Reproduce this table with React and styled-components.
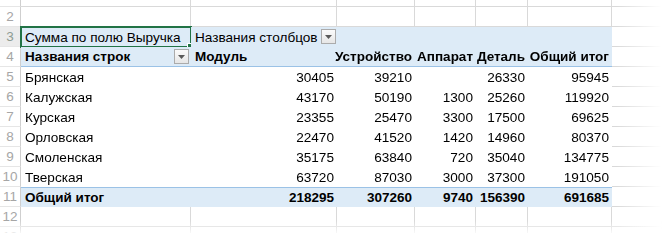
import React from "react";
import styled, { createGlobalStyle, css } from "styled-components";

const GlobalStyle = createGlobalStyle`
  html, body {
    margin: 0;
    padding: 0;
    background: #ffffff;
  }
  body {
    font-family: "Liberation Sans", Arial, sans-serif;
    font-size: 13.6px;
    color: #000000;
  }
`;

const COLS = "21px 170px 146px 78px 61px 52px 84px 1fr";
const GRID_LINE = "#d9d9d9";
const PIVOT_FILL = "#ddebf7";
const PIVOT_LINE = "#9bc2e6";

const FadeX = styled.div`
  width: 662px;
  height: 246px;
  overflow: hidden;
  -webkit-mask-image: linear-gradient(to right, #000 0, #000 616px, transparent 662px);
  mask-image: linear-gradient(to right, #000 0, #000 616px, transparent 662px);
`;

const FadeY = styled.div`
  height: 100%;
  -webkit-mask-image: linear-gradient(to bottom, transparent 0, #000 10px, #000 234px, rgba(0, 0, 0, 0.2) 246px);
  mask-image: linear-gradient(to bottom, transparent 0, #000 10px, #000 234px, rgba(0, 0, 0, 0.2) 246px);
`;

const Sheet = styled.div`
  display: grid;
  grid-template-columns: ${COLS};
  grid-auto-rows: 20px;
  margin-top: -13px;
`;

const RowHead = styled.div`
  box-sizing: border-box;
  display: flex;
  align-items: flex-end;
  justify-content: center;
  padding-bottom: 2px;
  font-size: 13.5px;
  color: ${(p) => (p.$active ? "#8e9c93" : "#a6a6a6")};
  background: ${(p) => (p.$active ? "#ececec" : "#ffffff")};
  border-right: 1px solid #cfcfcf;
  border-bottom: 1px solid #e6e6e6;
`;

const Cell = styled.div`
  box-sizing: border-box;
  position: relative;
  display: flex;
  align-items: flex-end;
  justify-content: ${(p) => (p.$right ? "flex-end" : "flex-start")};
  padding: 0 3px 2px 4px;
  white-space: nowrap;
  font-weight: ${(p) => (p.$bold ? 700 : 400)};
  font-size: ${(p) => (p.$bold ? "13.5px" : "inherit")};
  background: ${(p) => (p.$fill ? PIVOT_FILL : "transparent")};
  ${(p) =>
    p.$grid &&
    css`
      border-right: 1px solid ${GRID_LINE};
      border-bottom: 1px solid ${GRID_LINE};
    `}
  ${(p) =>
    p.$underline &&
    css`
      border-bottom: 1px solid ${PIVOT_LINE};
    `}
  ${(p) =>
    p.$overline &&
    css`
      border-top: 1px solid ${PIVOT_LINE};
    `}
`;

const Selection = styled.div`
  position: absolute;
  left: -1px;
  top: -1px;
  right: -1px;
  bottom: -1px;
  border: 2px solid #217346;
  pointer-events: none;

  &::after {
    content: "";
    position: absolute;
    right: -5px;
    bottom: -5px;
    width: 6px;
    height: 6px;
    background: #217346;
    border: 1px solid #ffffff;
  }
`;

const DropButton = styled.span`
  position: absolute;
  right: ${(p) => p.$right}px;
  top: 2px;
  width: 15px;
  height: 15px;
  box-sizing: border-box;
  border: 1px solid #ababab;
  background: linear-gradient(#fbfbfb, #e6e6e6);
  display: flex;
  align-items: center;
  justify-content: center;
`;

const Arrow = () => (
  <svg width="7" height="4" viewBox="0 0 7 4">
    <path d="M0 0h7L3.5 4z" fill="#5a5a5a" />
  </svg>
);

const rows = [
  ["Брянская", 30405, 39210, "", 26330, 95945],
  ["Калужская", 43170, 50190, 1300, 25260, 119920],
  ["Курская", 23355, 25470, 3300, 17500, 69625],
  ["Орловская", 22470, 41520, 1420, 14960, 80370],
  ["Смоленская", 35175, 63840, 720, 35040, 134775],
  ["Тверская", 63720, 87030, 3000, 37300, 191050],
];

const total = ["Общий итог", 218295, 307260, 9740, 156390, 691685];

const EmptyRow = ({ n }) => (
  <>
    <RowHead>{n}</RowHead>
    {Array.from({ length: 7 }).map((_, i) => (
      <Cell key={i} $grid />
    ))}
  </>
);

const DataRow = ({ n, values, bold, last }) => (
  <>
    <RowHead>{n}</RowHead>
    {values.map((v, i) => (
      <Cell key={i} $right={i > 0} $bold={bold} $fill={last} $overline={last}>
        {v}
      </Cell>
    ))}
    <Cell $grid />
  </>
);

export default function App() {
  return (
    <>
      <GlobalStyle />
      <FadeX>
        <FadeY>
          <Sheet>
            <EmptyRow />
            <EmptyRow n={2} />

            <RowHead $active>3</RowHead>
            <Cell $fill>
              Сумма по полю Выручка
              <Selection />
            </Cell>
            <Cell $fill>
              Названия столбцов
              <DropButton $right={1}>
                <Arrow />
              </DropButton>
            </Cell>
            <Cell $fill />
            <Cell $fill />
            <Cell $fill />
            <Cell $fill />
            <Cell $grid />

            <RowHead>4</RowHead>
            <Cell $fill $bold $underline>
              Названия строк
              <DropButton $right={2}>
                <Arrow />
              </DropButton>
            </Cell>
            <Cell $fill $bold $underline>Модуль</Cell>
            <Cell $fill $bold $underline $right>Устройство</Cell>
            <Cell $fill $bold $underline $right>Аппарат</Cell>
            <Cell $fill $bold $underline $right>Деталь</Cell>
            <Cell $fill $bold $underline $right>Общий итог</Cell>
            <Cell $grid />

            {rows.map((r, i) => (
              <DataRow key={i} n={i + 5} values={r} />
            ))}
            <DataRow n={11} values={total} bold last />

            <EmptyRow n={12} />
            <EmptyRow n={13} />
          </Sheet>
        </FadeY>
      </FadeX>
    </>
  );
}
